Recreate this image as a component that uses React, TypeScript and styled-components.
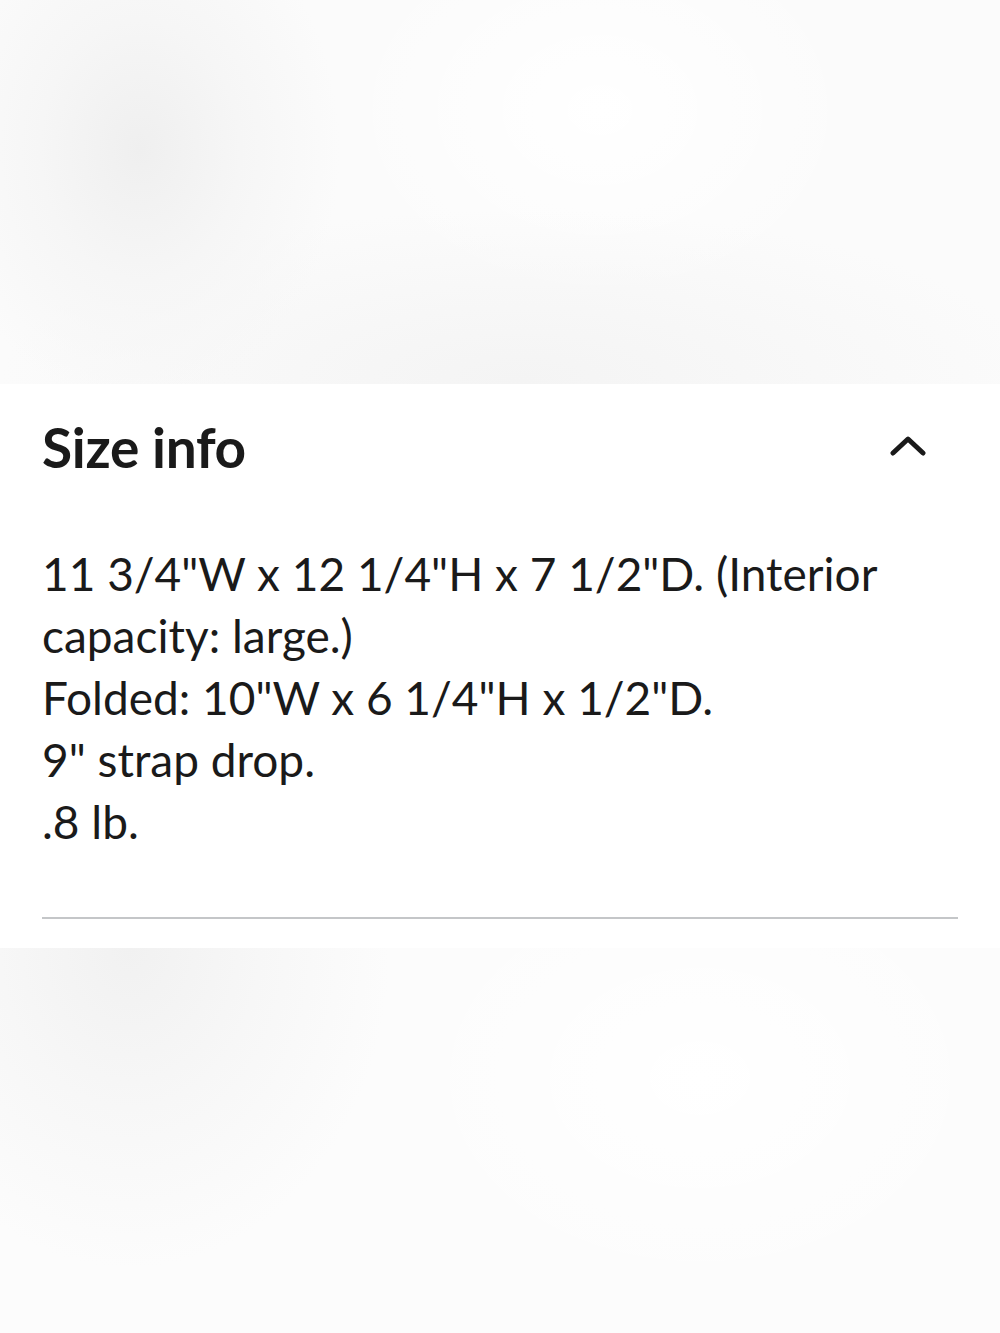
import React from "react";
import styled, { createGlobalStyle } from "styled-components";

const GlobalStyle = createGlobalStyle`
  html, body {
    margin: 0;
    padding: 0;
    background: #ffffff;
  }
  body {
    font-family: Lato, "Open Sans", sans-serif;
    color: #1a1a1a;
  }
`;

const Page = styled.div`
  display: flex;
  flex-direction: column;
  width: 1000px;
  height: 1333px;
  overflow: hidden;
`;

const Blur = styled.div<{ tall: number; top?: boolean }>`
  height: ${({ tall }) => tall}px;
  flex: none;
  background: ${({ top }) =>
    top
      ? `radial-gradient(ellipse 200px 260px at 140px 150px, #efefef 0%, #f6f6f6 50%, rgba(250,250,250,0) 100%),
         radial-gradient(ellipse 520px 170px at 520px 380px, #f4f4f4 0%, rgba(248,248,248,0) 100%),
         radial-gradient(ellipse 260px 200px at 600px 110px, #ffffff 0%, rgba(255,255,255,0) 100%),
         #fbfbfb`
      : `radial-gradient(ellipse 260px 320px at 130px 0px, #f1f1f1 0%, #f7f7f7 50%, rgba(250,250,250,0) 100%),
         radial-gradient(ellipse 300px 220px at 700px 130px, #ffffff 0%, rgba(255,255,255,0) 100%),
         #fcfcfc`};
`;

const Panel = styled.section`
  flex: none;
  background: #ffffff;
  padding: 0 42px;
  height: 564px;
  box-sizing: border-box;
  display: flex;
  flex-direction: column;
`;

const Header = styled.div`
  display: flex;
  align-items: center;
  justify-content: space-between;
  height: 126px;
`;

const Title = styled.h2`
  margin: 0;
  font-size: 55px;
  font-weight: 700;
  letter-spacing: -0.3px;
  color: #1a1a1a;
`;

const Toggle = styled.button`
  border: none;
  background: none;
  padding: 0;
  margin-right: 32px;
  display: flex;
  cursor: pointer;
`;

const Body = styled.div`
  padding-top: 33px;
  font-size: 46px;
  line-height: 62px;
  color: #1a1a1a;
  flex: 1;
`;

const Line = styled.div``;

const Rule = styled.hr`
  border: 0;
  height: 2px;
  background: #c4c6c8;
  margin: 0 0 29px;
`;

const Chevron = () => (
  <svg width="36" height="24" viewBox="0 0 36 24">
    <path
      d="M3 18 L18 4 L33 18"
      fill="none"
      stroke="#1a1a1a"
      strokeWidth="5"
      strokeLinecap="round"
      strokeLinejoin="round"
    />
  </svg>
);

export default function App() {
  return (
    <Page>
      <GlobalStyle />
      <Blur tall={384} top />
      <Panel>
        <Header>
          <Title>Size info</Title>
          <Toggle aria-label="Collapse">
            <Chevron />
          </Toggle>
        </Header>
        <Body>
          <Line>11 3/4"W x 12 1/4"H x 7 1/2"D. (Interior capacity: large.)</Line>
          <Line>Folded: 10"W x 6 1/4"H x 1/2"D.</Line>
          <Line>9" strap drop.</Line>
          <Line>.8 lb.</Line>
        </Body>
        <Rule />
      </Panel>
      <Blur tall={385} />
    </Page>
  );
}
